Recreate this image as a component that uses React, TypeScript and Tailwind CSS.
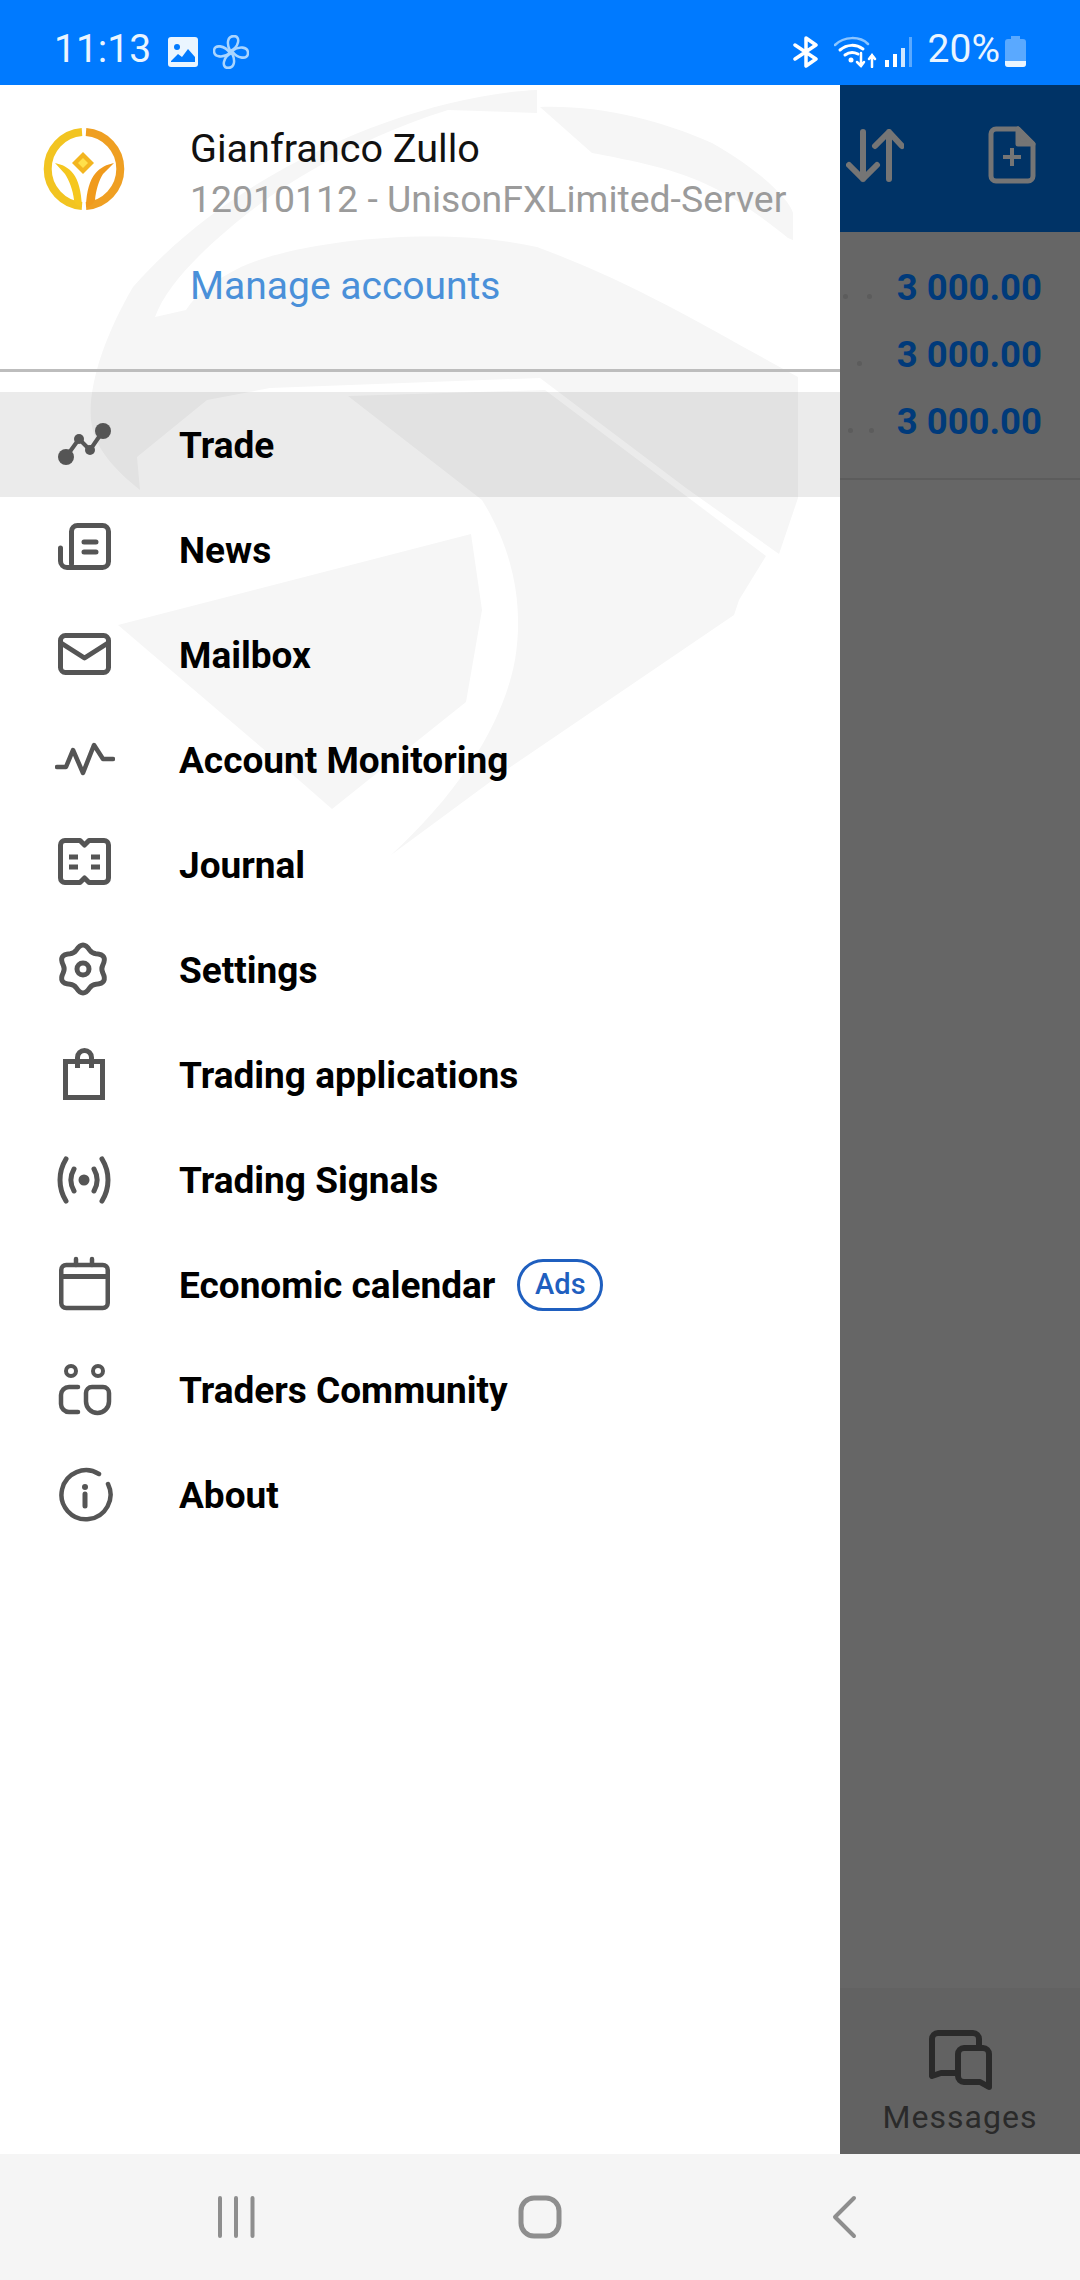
import React, { type ReactNode } from 'react';

const FONT = "font-['Roboto','Noto_Sans',sans-serif]";

function Svg({ children, size = 60 }: { children: ReactNode; size?: number }) {
  return (
    <svg width={size} height={size} viewBox={`0 0 ${size} ${size}`} fill="none" stroke="#555555" strokeWidth={5} strokeLinecap="round" strokeLinejoin="round">
      {children}
    </svg>
  );
}

// six lobed cog, points worked out once so the file stays short
function gearPath(cx: number, cy: number) {
  let d = '';
  for (let i = 0; i < 6; i++) {
    const a = (Math.PI / 3) * i - Math.PI / 2;
    const b = a + Math.PI / 6;
    const c = a + Math.PI / 3;
    const pt = (r: number, t: number) => `${(cx + r * Math.cos(t)).toFixed(1)} ${(cy + r * Math.sin(t)).toFixed(1)}`;
    if (i === 0) d += `M${pt(20, a - 0.34)} `;
    d += `Q${pt(29, a)} ${pt(20, a + 0.34)} Q${pt(18, b)} ${pt(20, c - 0.34)} `;
  }
  return d + 'Z';
}

const TradeIcon = () => (
  <Svg>
    <path d="M11 42 24 24 35 35 48 16" strokeWidth={4} />
    <circle cx="11" cy="42" r="8" fill="#555555" stroke="none" />
    <circle cx="24" cy="24" r="5" fill="#555555" stroke="none" />
    <circle cx="35" cy="35" r="5" fill="#555555" stroke="none" />
    <circle cx="48" cy="16" r="8" fill="#555555" stroke="none" />
  </Svg>
);

const NewsIcon = () => (
  <Svg>
    <path d="M5.500 28V41a6.500 6.500 0 0 0 6.500 6.500H47.500a6 6 0 0 0 6-6V11.500a6 6 0 0 0-6-6H22.500a6 6 0 0 0-6 6V44" />
    <path d="M29 22H41M29 32H41" />
  </Svg>
);

const MailIcon = () => (
  <Svg>
    <rect x="5.500" y="10.500" width="48" height="37" rx="5" />
    <path d="M6 18 29.500 33 53 18" />
  </Svg>
);

const PulseIcon = () => (
  <Svg>
    <path d="M2 37H11L18 20 28 43 39 15 48 29H58" strokeWidth={4.5} />
  </Svg>
);

const JournalIcon = () => (
  <Svg>
    <path d="M10 5.500H25L29.500 10 34 5.500H49A4.500 4.500 0 0 1 53.500 10V43A4.500 4.500 0 0 1 49 47.500H34L29.500 43 25 47.500H10A4.500 4.500 0 0 1 5.500 43V10A4.500 4.500 0 0 1 10 5.500Z" />
    <path d="M14 22H23M14 32H23M36 22H45M36 32H45" strokeLinecap="butt" />
  </Svg>
);

const GearIcon = () => (
  <Svg>
    <path d={gearPath(28, 29)} />
    <circle cx="28" cy="29" r="6" />
  </Svg>
);

const BagIcon = () => (
  <Svg>
    <rect x="10.500" y="16.500" width="37" height="36" strokeLinejoin="miter" />
    <path d="M22.500 23V12.500a7 7 0 0 1 14 0V23" strokeLinecap="butt" />
  </Svg>
);

const SignalIcon = () => (
  <Svg>
    <path d="M11 9C3 22 3 38 11 51M47 9C55 22 55 38 47 51M19 19C15 26 15 34 19 41M39 19C43 26 43 34 39 41" />
    <circle cx="29" cy="30" r="5.500" fill="#555555" stroke="none" />
  </Svg>
);

const CalendarIcon = () => (
  <Svg>
    <rect x="6.250" y="10" width="46.500" height="43" rx="5" strokeWidth={4.5} />
    <path d="M21 4V10M37 4V10" strokeWidth={4.5} />
    <path d="M7 21.500H52" strokeLinecap="butt" />
  </Svg>
);

const CommunityIcon = () => (
  <Svg>
    <circle cx="16" cy="11" r="5" strokeWidth={4} />
    <circle cx="43" cy="11" r="5" strokeWidth={4} />
    <path d="M23 27H14A8 8 0 0 0 6 35V44A8 8 0 0 0 14 52H23" strokeWidth={4.5} />
    <path d="M37 27H48A6 6 0 0 1 54 33V41.500A11.500 11.500 0 0 1 31 41.500V33A6 6 0 0 1 37 27Z" strokeWidth={4.5} />
  </Svg>
);

const AboutIcon = () => (
  <Svg>
    <path d="M53 19A24.500 24.500 0 1 1 44 9" strokeWidth={4.5} />
    <circle cx="30" cy="22" r="3" fill="#555555" stroke="none" />
    <path d="M30 29V41" />
  </Svg>
);

const menu: { label: string; icon: ReactNode; active?: boolean; ads?: boolean }[] = [
  { label: 'Trade', icon: <TradeIcon />, active: true },
  { label: 'News', icon: <NewsIcon /> },
  { label: 'Mailbox', icon: <MailIcon /> },
  { label: 'Account Monitoring', icon: <PulseIcon /> },
  { label: 'Journal', icon: <JournalIcon /> },
  { label: 'Settings', icon: <GearIcon /> },
  { label: 'Trading applications', icon: <BagIcon /> },
  { label: 'Trading Signals', icon: <SignalIcon /> },
  { label: 'Economic calendar', icon: <CalendarIcon />, ads: true },
  { label: 'Traders Community', icon: <CommunityIcon /> },
  { label: 'About', icon: <AboutIcon /> },
];

function StatusBar() {
  return (
    <div className="h-[85px] shrink-0 bg-[#007aff] flex items-center pt-[16px] pl-[54px] pr-[54px] text-[#eaf5ff]">
      <span className="text-[39px] leading-none w-[114px] mt-[-2px]">11:13</span>
      {/* gallery */}
      <svg width="30" height="30" viewBox="0 0 30 30" className="mt-[2px]">
        <rect width="30" height="30" rx="3" fill="#eaf5ff" />
        <circle cx="9" cy="10" r="3" fill="#007aff" />
        <path d="M3 24 10 17 14 20 20 12 27 20V25H3Z" fill="#007aff" />
      </svg>
      {/* fan */}
      <svg width="36" height="34" viewBox="0 0 36 32" preserveAspectRatio="none" fill="none" stroke="#a9d5ff" strokeWidth="2.500" className="ml-[15px] mt-[2px]">
        <path d="M17 15C13 7 15 1 21 1C28 1 26 12 17 15Z" />
        <path d="M19 15C26 10 35 11 35 17C35 24 24 22 19 15Z" />
        <path d="M19 17C23 25 21 31 15 31C8 31 10 20 19 17Z" />
        <path d="M17 17C10 22 1 21 1 15C1 8 12 10 17 17Z" />
      </svg>
      <div className="flex-1" />
      {/* bluetooth */}
      <svg width="28" height="32" viewBox="0 0 28 32" fill="none" stroke="#ffffff" strokeWidth="3.500" strokeLinejoin="round" strokeLinecap="round" className="mt-[2px]">
        <path d="M3 9 24 23 14 30V2L24 9 3 23" />
      </svg>
      {/* wifi */}
      <svg width="43" height="32" viewBox="0 0 43 32" fill="none" strokeLinecap="round" className="ml-[14px] mt-[2px]">
        <path d="M1 9C10 0 26 0 34 8" stroke="#8cc5ff" strokeWidth="2.500" />
        <path d="M6 14C13 8 22 8 29 13" stroke="#ffffff" strokeWidth="3" />
        <path d="M11 19C15 16 20 16 24 18" stroke="#ffffff" strokeWidth="3" />
        <circle cx="17" cy="24" r="2.500" fill="#ffffff" />
        <path d="M27 17V30M23 26 27 30 30 26" stroke="#ffffff" strokeWidth="2.500" />
        <path d="M38 31V19M35 23 38 19 41 23" stroke="#ffffff" strokeWidth="2.500" />
      </svg>
      {/* signal */}
      <div className="ml-[8px] mt-[2px] flex items-end gap-[4px] h-[30px]">
        <span className="w-[4px] h-[7px] bg-white" />
        <span className="w-[4px] h-[13px] bg-white" />
        <span className="w-[4px] h-[19px] bg-[#cfe6ff]" />
        <span className="w-[3px] h-[30px] bg-[#5aa9ff]" />
      </div>
      <span className="text-[39px] leading-none ml-[16px] mt-[-2px]">20%</span>
      {/* battery */}
      <div className="ml-[5px] mt-[2px] flex flex-col items-center w-[21px]">
        <span className="w-[9px] h-[3px] bg-[#5aa9ff]" />
        <div className="w-[21px] h-[28px] rounded-[3px] bg-[#5aa9ff] flex flex-col justify-end overflow-hidden">
          <span className="h-[6px] bg-[#eaf5ff]" />
        </div>
      </div>
    </div>
  );
}

function Logo() {
  return (
    <svg width="90" height="90" viewBox="0 0 90 90" fill="none" className="shrink-0">
      <path d="M43 8.100A37 37 0 0 0 43 81.900" stroke="#f2c421" strokeWidth="8" />
      <path d="M47 8.100A37 37 0 0 1 47 81.900" stroke="#ef9f22" strokeWidth="8" />
      <path d="M16 39C30 42 42 50 43 83C37 82 35 78 35 76C34 66 30 56 26 50Z" fill="#f5c71f" />
      <path d="M75 39C61 42 48 50 47 83C53 82 55 78 56 76C57 66 60 56 64 50Z" fill="#f09a1c" />
      <path d="M44 28 55 39 44 50 33 39Z" fill="#f3b51f" />
      <path d="M44 34 49 39 44 44 39 39Z" fill="#ffe04a" />
    </svg>
  );
}

// faint emblem behind the drawer content
function Watermark() {
  return (
    <svg className="absolute left-0 top-0" width="840" height="2069" viewBox="0 85 840 2069" fill="#f6f6f6">
      <path d="M537 90C420 95 240 165 133 287C105 335 88 385 91 420C94 450 118 472 140 490L137 457L207 400L270 388L540 378L686 488L779 554L798 498V377C720 335 640 285 537 247C440 225 300 240 241 267C215 280 195 295 186 310L155 317C170 275 230 225 275 193C340 150 400 125 448 110L537 113Z" />
      <path d="M348 396L545 390L766 556L739 600L734 615L509 768L391 855C440 810 500 740 515 660C525 600 510 545 482 500Z" />
      <path d="M118 625L471 534L482 610L466 702L332 809L268 753Z" />
      <path d="M540 107C600 105 660 120 712 143C760 170 790 200 793 213V240L788 238C760 215 730 195 712 187C680 170 630 160 592 153Z" />
    </svg>
  );
}

function Drawer() {
  return (
    <div className="relative w-[840px] shrink-0 bg-white overflow-hidden">
      <Watermark />
      <div className="relative">
        <div className="h-[287px] border-b-[3px] border-[#bdbdbd] pl-[39px] pt-[39px] flex">
          <Logo />
          <div className="ml-[61px]">
            <div className="text-[39.6px] leading-[50px] text-[#111111]">Gianfranco Zullo</div>
            <div className="text-[37.4px] leading-[50px] text-[#9b9b9b] whitespace-nowrap">12010112 - UnisonFXLimited-Server</div>
            <div className="text-[39px] leading-[50px] text-[#4a90d9] mt-[37px]">Manage accounts</div>
          </div>
        </div>
        <div className="mt-[20px]">
          {menu.map((item) => (
            <div key={item.label} className={`h-[105px] flex items-center pl-[55px] ${item.active ? 'bg-[#00000014]' : ''}`}>
              {item.icon}
              <span className="ml-[64px] mt-[2px] text-[37px] font-bold text-black whitespace-nowrap">{item.label}</span>
              {item.ads && (
                <span className="ml-[22px] h-[52px] w-[86px] rounded-full border-[3px] border-[#1f5fbf] text-[#1f5fbf] text-[29px] font-medium flex items-center justify-center">Ads</span>
              )}
            </div>
          ))}
        </div>
      </div>
    </div>
  );
}

function Backdrop() {
  return (
    <div className="flex-1 flex flex-col bg-[#666666]">
      <div className="h-[147px] bg-[#003366] flex items-start pt-[44px] pl-[6px]">
        <svg width="58" height="54" viewBox="0 0 58 54" fill="none" stroke="#757575" strokeWidth="6" strokeLinecap="round" strokeLinejoin="round">
          <path d="M17 3V50M3 36 17 50 31 36" />
          <path d="M43 50V3M29 17 43 3 56 17" />
        </svg>
        <svg width="48" height="58" viewBox="0 0 48 58" fill="none" stroke="#757575" strokeWidth="5" strokeLinejoin="round" className="ml-[84px] mt-[-3px]">
          <path d="M8 3H30L45 18V50A5 5 0 0 1 40 55H8A5 5 0 0 1 3 50V8A5 5 0 0 1 8 3Z" />
          <path d="M30 3V18H45Z" fill="#757575" />
          <path d="M24 22V40M15 31H33" strokeWidth="4" />
        </svg>
      </div>
      <div className="h-[248px] border-b-2 border-[#5c5c5c] pt-[23px]">
        {[[3, 27], [17], [8, 29]].map((dots, i) => (
          <div key={i} className="relative h-[67px] flex items-center justify-end pr-[38px]">
            {dots.map((x) => (
              <span key={x} className="absolute top-[39px] w-[5px] h-[5px] rounded-full bg-[#5c5c5c]" style={{ left: x }} />
            ))}
            <span className="text-[36.5px] font-bold text-[#003a7a] leading-none">3 000.00</span>
          </div>
        ))}
      </div>
      <div className="flex-1" />
      <div className="h-[166px] bg-[#626262] flex flex-col items-center pt-[42px]">
        <svg width="64" height="60" viewBox="0 0 64 60" fill="none" stroke="#2a2a2a" strokeWidth="6" strokeLinejoin="round">
          <path d="M30 36V43H13L4 46V9A6 6 0 0 1 10 3H45A6 6 0 0 1 51 9V18" />
          <path d="M36 18H55A6 6 0 0 1 61 24V57L52 52H36A6 6 0 0 1 30 46V24A6 6 0 0 1 36 18Z" />
        </svg>
        <span className="text-[32px] leading-none tracking-[1px] text-[#2a2a2a] mt-[11px]">Messages</span>
      </div>
    </div>
  );
}

function NavBar() {
  return (
    <div className="h-[126px] shrink-0 bg-[#f5f5f5] flex items-start pt-[41px] pl-[218px]">
      <svg width="40" height="44" viewBox="0 0 40 44" fill="none" stroke="#8e8e8e" strokeWidth="4" strokeLinecap="round">
        <path d="M2 3V41M18 3V41M34.500 3V41" />
      </svg>
      <svg width="44" height="44" viewBox="0 0 44 44" fill="none" stroke="#8e8e8e" strokeWidth="5" className="ml-[260px]">
        <rect x="3" y="3" width="38" height="38" rx="13" />
      </svg>
      <svg width="26" height="44" viewBox="0 0 26 44" fill="none" stroke="#8e8e8e" strokeWidth="4" strokeLinecap="round" strokeLinejoin="round" className="ml-[270px]">
        <path d="M22 3 3 22 22 41" />
      </svg>
    </div>
  );
}

export default function App() {
  return (
    <div className={`w-[1080px] h-[2280px] flex flex-col overflow-hidden ${FONT}`}>
      <StatusBar />
      <div className="flex-1 flex min-h-0">
        <Drawer />
        <Backdrop />
      </div>
      <NavBar />
    </div>
  );
}
